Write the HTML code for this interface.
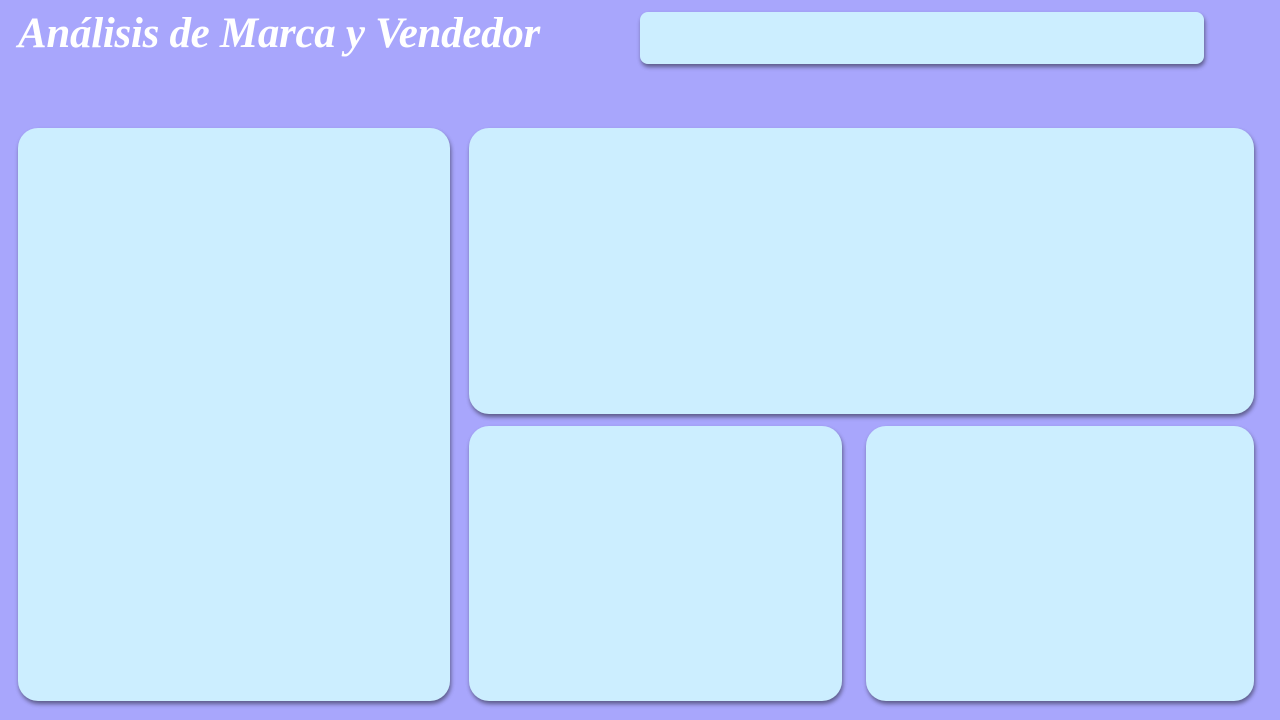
<!DOCTYPE html>
<html><head><meta charset="utf-8"><style>
html,body{margin:0;padding:0;width:1280px;height:720px;overflow:hidden;background:#A8A6FC;}
.p{position:absolute;background:#CCEEFF;border-radius:20px;box-shadow:1px 3px 4px rgba(0,0,0,0.45);}
h1{position:absolute;left:18px;top:9px;margin:0;font-family:"Liberation Serif",serif;font-style:italic;font-weight:bold;font-size:43px;color:#fff;letter-spacing:-0.3px;white-space:nowrap;}
</style></head><body>
<h1>Análisis de Marca y Vendedor</h1>
<div class="p" style="left:640px;top:12px;width:564px;height:52px;border-radius:8px"></div>
<div class="p" style="left:18px;top:128px;width:432px;height:573px"></div>
<div class="p" style="left:469px;top:128px;width:785px;height:286px"></div>
<div class="p" style="left:469px;top:426px;width:373px;height:275px"></div>
<div class="p" style="left:866px;top:426px;width:388px;height:275px"></div>
</body></html>
